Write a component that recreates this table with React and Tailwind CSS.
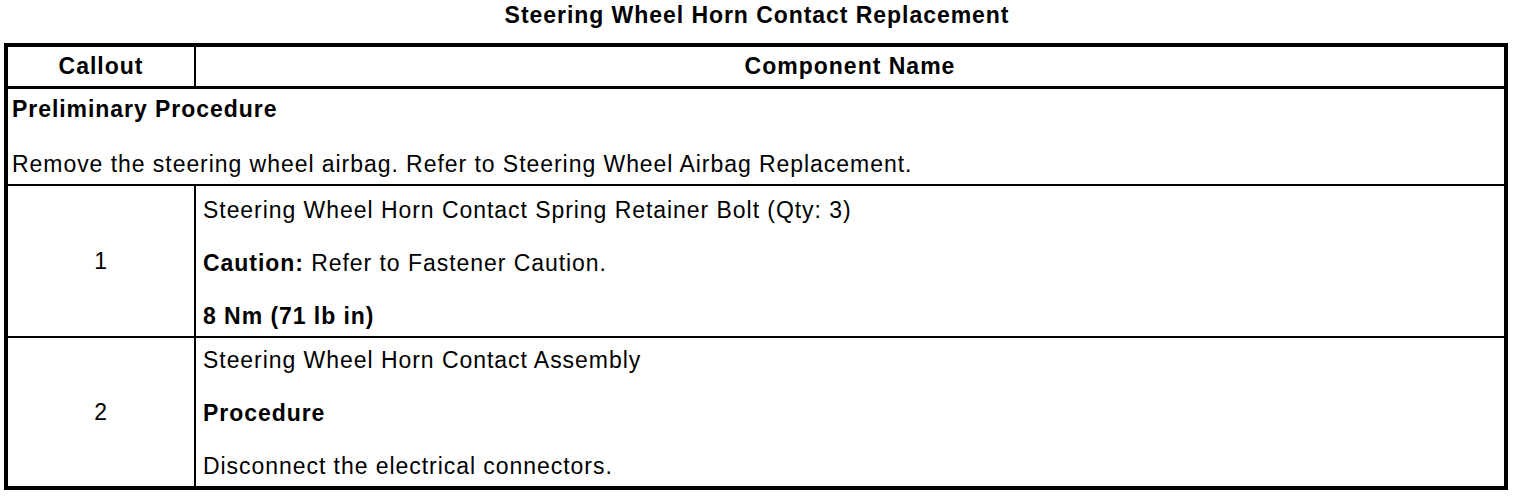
const Para = ({ children, className = "" }) => (
    <p className={`leading-[27px] ${className}`}>{children}</p>
);

const Row = ({ callout, className, children }) => (
    <div className="grid grid-cols-[188px_1fr]">
        <div className="flex items-center justify-center border-r-2 border-black">{callout}</div>
        <div className={`flex flex-col pl-[7px] ${className}`}>{children}</div>
    </div>
);

export default function App() {
    return (
        <div className="w-[1520px] h-[496px] bg-white text-black font-['Liberation_Sans',Arial,sans-serif] text-[23px] tracking-[0.95px]">
            {/* Title */}
            <div className="h-[43px] pt-[2px] pr-[6px] text-center font-bold leading-[27px] tracking-[0.95px]">
                Steering Wheel Horn Contact Replacement
            </div>

            <div className="ml-[4px] w-[1504px] border-4 border-black">
                {/* Header */}
                <div className="grid grid-cols-[188px_1fr] h-[42px] border-b-[3px] border-black font-bold tracking-[1px]">
                    <div className="flex items-center justify-center border-r-2 border-black">Callout</div>
                    <div className="flex items-center justify-center">Component Name</div>
                </div>

                {/* Preliminary */}
                <div className="h-[97px] border-b-2 border-black pl-[4px] pt-[7px] flex flex-col gap-[28px]">
                    <Para className="font-bold">Preliminary Procedure</Para>
                    <Para>Remove the steering wheel airbag. Refer to Steering Wheel Airbag Replacement.</Para>
                </div>

                {/* Step 1 */}
                <div className="h-[152px] border-b-2 border-black">
                    <Row callout="1" className="h-[150px] pt-[11px] gap-[26px]">
                        <Para>Steering Wheel Horn Contact Spring Retainer Bolt (Qty: 3)</Para>
                        <Para>
                            <span className="font-bold">Caution:</span> Refer to Fastener Caution.
                        </Para>
                        <Para className="font-bold">8 Nm (71 lb in)</Para>
                    </Row>
                </div>

                {/* Step 2 */}
                <div className="h-[148px]">
                    <Row callout="2" className="h-[148px] pt-[9px] gap-[26px]">
                        <Para>Steering Wheel Horn Contact Assembly</Para>
                        <Para className="font-bold">Procedure</Para>
                        <Para>Disconnect the electrical connectors.</Para>
                    </Row>
                </div>
            </div>
        </div>
    );
}
